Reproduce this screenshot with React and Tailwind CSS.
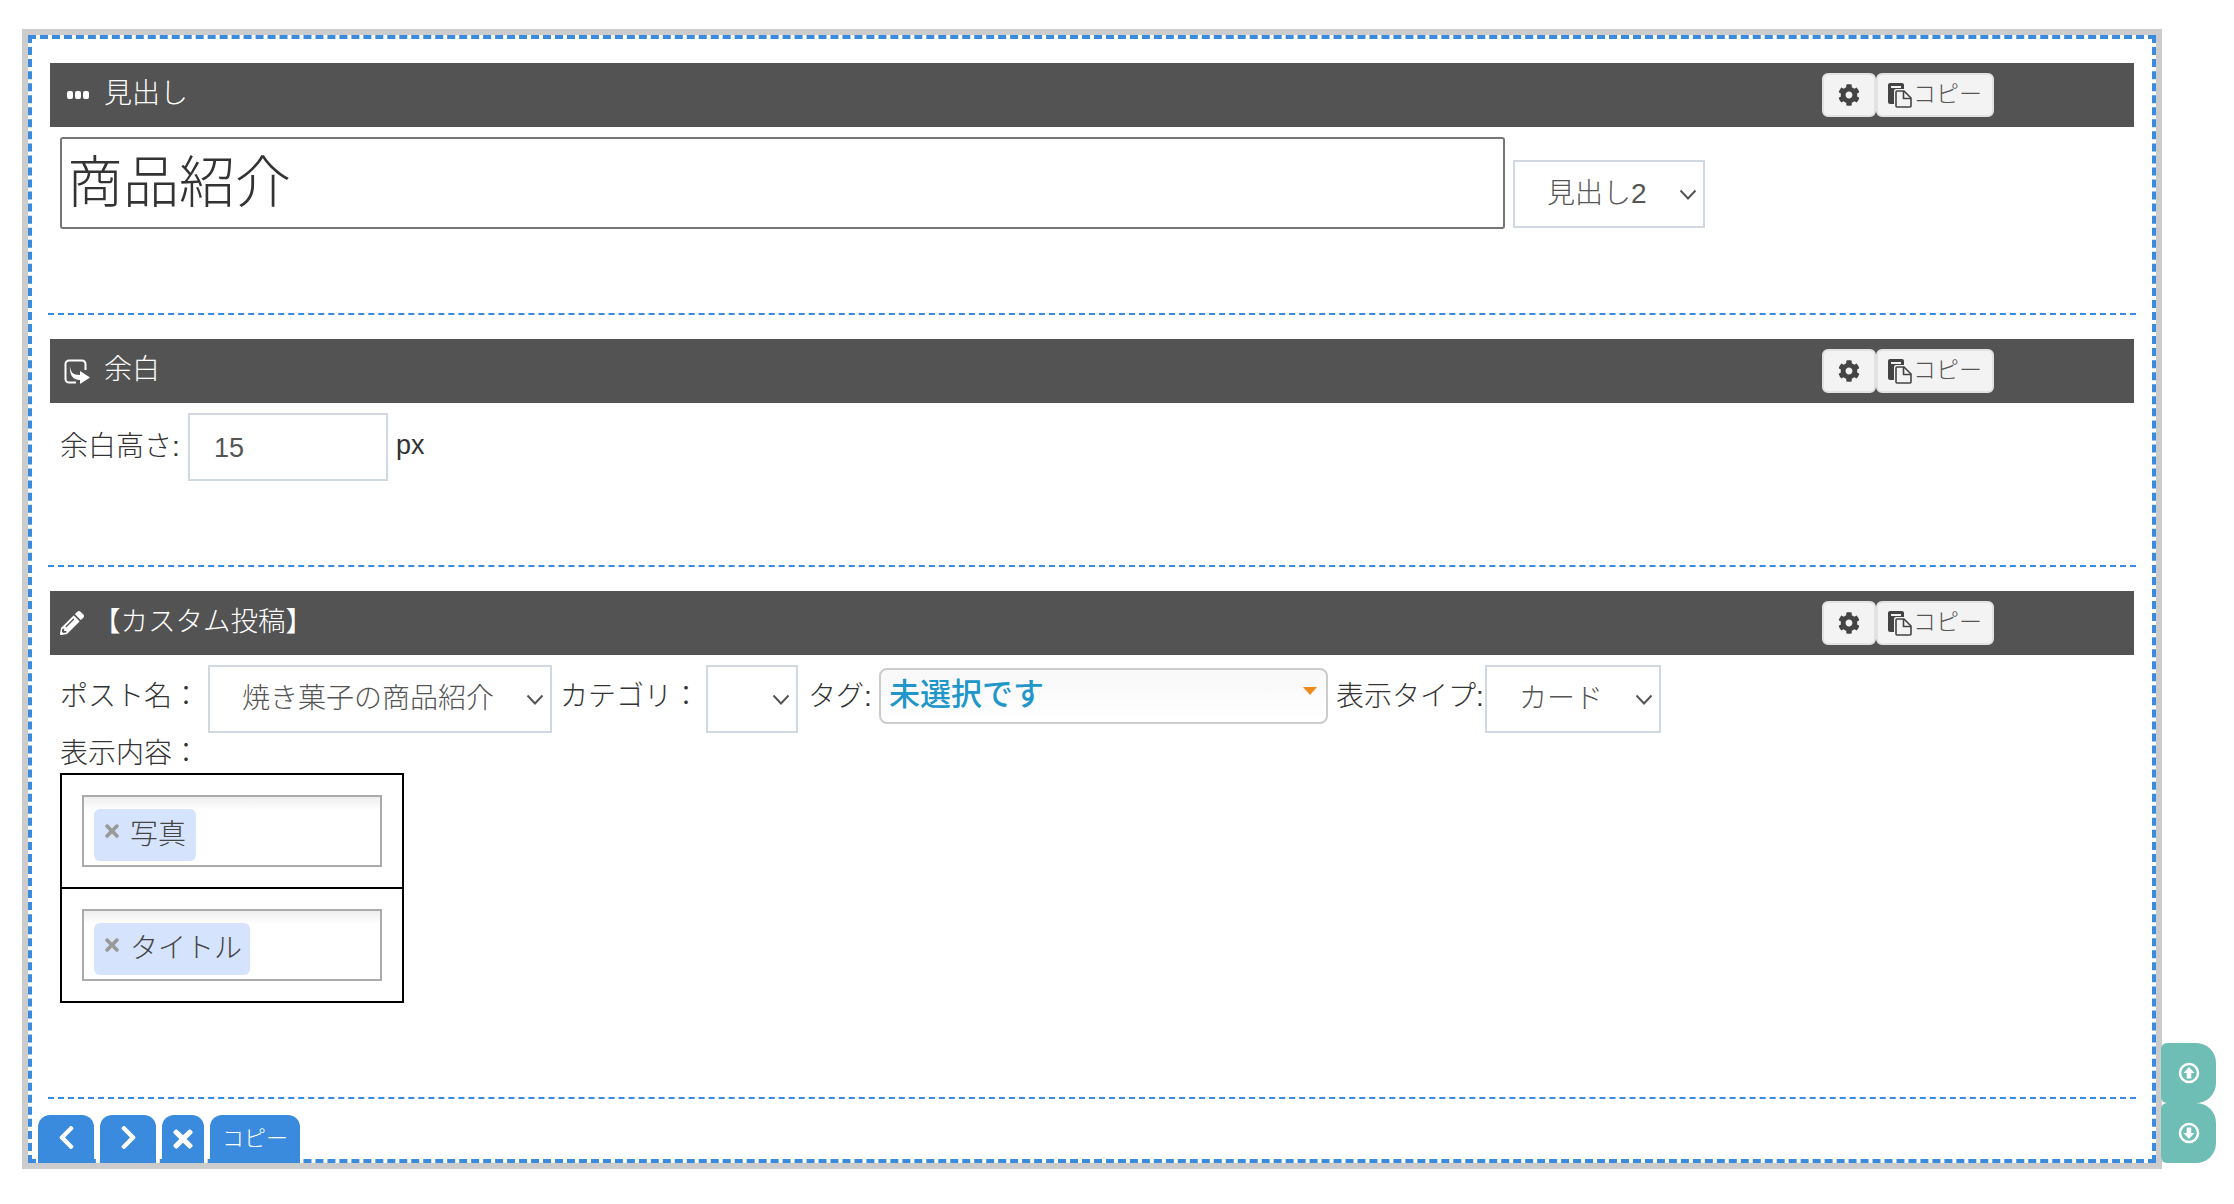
import React from 'react';
import { FaCog, FaPencilAlt, FaChevronLeft, FaChevronRight, FaTimes } from 'react-icons/fa';

const FONT = "font-['Liberation_Sans','Noto_Sans_CJK_JP',sans-serif]";

const Chevron = () => (
  <svg width="18" height="11" viewBox="0 0 18 11" fill="none" stroke="#555" strokeWidth="2">
    <path d="M1.5 1.5 9 9.5l7.5-8" />
  </svg>
);

const Dots = () => (
  <svg width="22" height="8" viewBox="0 0 22 8" fill="#fff">
    <rect x="0" y="0" width="6" height="8" rx="2" />
    <rect x="8" y="0" width="6" height="8" rx="2" />
    <rect x="16" y="0" width="6" height="8" rx="2" />
  </svg>
);

const ShareIcon = () => (
  <svg width="27" height="25" viewBox="0 0 27 25" fill="none">
    <path d="M12 23.5H5A3.5 3.5 0 0 1 1.500 20V5A3.500 3.500 0 0 1 5 1.500h13A3.500 3.500 0 0 1 21.500 5v6" stroke="#fff" strokeWidth="2" />
    <path d="M6 6c0 7 3 10 10 10v-4l10 6.500-10 6.500v-4C9 21 5 16 6 6z" fill="#fff" />
  </svg>
);

const CopyIcon = () => (
  <svg width="25" height="25" viewBox="0 0 25 25" className="shrink-0">
    <path d="M2 0h12a2 2 0 0 1 2 2v4H8a2 2 0 0 0-2 2v13H2a2 2 0 0 1-2-2V2a2 2 0 0 1 2-2z" fill="#444" />
    <rect x="3" y="3" width="10" height="2" fill="#f3f3f3" />
    <path d="M9 8h7l7 7v8a1 1 0 0 1-1 1H9a1 1 0 0 1-1-1V9a1 1 0 0 1 1-1z" fill="#f3f3f3" stroke="#444" strokeWidth="1.600" />
    <path d="M15.500 8v7.500H23" fill="none" stroke="#444" strokeWidth="1.600" />
  </svg>
);

const Ring = ({ down }) => (
  <svg width="22" height="22" viewBox="0 0 22 22" fill="none" className={down ? 'rotate-180' : ''}>
    <circle cx="11" cy="11" r="9" stroke="#fff" strokeWidth="2.500" />
    <path d="M11 5l5.500 6H13.300v5.500H8.700V11H5.500z" fill="#fff" />
  </svg>
);

const Bar = ({ icon, title, titleClass, iconClass }) => (
  <div className="flex h-16 items-center bg-[#535353] pr-[140px] text-white">
    <div className={`flex w-[54px] shrink-0 items-center ${iconClass}`}>{icon}</div>
    <span className={`-mt-[2px] font-light ${titleClass || 'text-[28px]'}`}>{title}</span>
    <div className="ml-auto flex text-[#444]">
      <button className="flex h-11 w-[54px] items-center justify-center rounded-md border-2 border-[#e2e2e2] bg-[#f3f3f3]">
        <FaCog size={22} />
      </button>
      <button className="flex h-11 w-[118px] items-center justify-center rounded-md border-2 border-[#e2e2e2] bg-[#f3f3f3] text-[23px] font-light text-[#555]">
        <CopyIcon />
        <span className="-mt-[2px]">コピー</span>
      </button>
    </div>
  </div>
);

const Select = ({ value, className }) => (
  <div className={`flex h-[68px] shrink-0 items-center justify-between border-2 border-[#d2d8e2] bg-white pl-[32px] pr-[6px] text-[28px] font-light text-[#555] ${className}`}>
    <span>{value}</span>
    <Chevron />
  </div>
);

const Chip = ({ label, className }) => (
  <div className="flex h-[72px] w-[300px] items-start border-2 border-[#aaa] bg-gradient-to-b from-[#eeeeee] to-white to-20% pl-[10px] pt-3">
    <div className={`flex h-[52px] items-center rounded-md bg-[#d5e3fd] pl-[8px] ${className}`}>
      <FaTimes size={20} className="-mt-[8px] shrink-0 text-[#999]" />
      <span className="ml-[8px] text-[28px] font-light text-[#444]">{label}</span>
    </div>
  </div>
);

const Block = ({ children, bodyClass }) => (
  <section className="mx-4 border-b-2 border-dashed border-[#3a8bdd] px-0.5 pt-6">
    {children[0]}
    <div className={`pl-[10px] pt-[10px] text-[28px] font-light text-[#333] ${bodyClass}`}>{children[1]}</div>
  </section>
);

export default function App() {
  return (
    <div className={`${FONT} relative min-h-[1204px] bg-white pl-[22px] pt-[29px]`}>
      <div className="relative h-[1140px] w-[2140px] border-[6px] border-[#cccccc]">
        <div className="h-full border-4 border-dashed border-[#3a8bdd] bg-white">
          <Block bodyClass="h-[186px]">
            <Bar icon={<Dots />} iconClass="pl-[17px]" title="見出し" />
            <div className="flex items-start">
              <input
                readOnly
                value="商品紹介"
                className="h-[92px] w-[1445px] rounded-[3px] border-2 border-[#767676] pb-[11px] pl-[5px] text-[56px] font-light text-[#333]"
              />
              <Select value="見出し2" className="ml-2 mt-[23px] w-[192px]" />
            </div>
          </Block>

          <Block bodyClass="h-[162px]">
            <Bar icon={<ShareIcon />} iconClass="pl-[14px]" title="余白" />
            <div className="flex items-start">
              <span className="mt-[13px] w-[128px] shrink-0">余白高さ:</span>
              <input
                readOnly
                value="15"
                className="h-[68px] w-[200px] border-2 border-[#d2d8e2] pl-[24px] pt-[2px] text-[27px] text-[#555]"
              />
              <span className="ml-2 mt-[12px] text-[27px]">px</span>
            </div>
          </Block>

          <Block bodyClass="h-[442px]">
            <Bar icon={<FaPencilAlt size={24} />} iconClass="pl-[10px]" title="【カスタム投稿】" titleClass="-ml-[11px] text-[27.500px]" />
            <div>
              <div className="flex items-start">
                <span className="mt-[11px] w-[148px] shrink-0">ポスト名：</span>
                <Select value="焼き菓子の商品紹介" className="w-[344px]" />
                <span className="ml-[8px] mt-[11px] w-[146px] shrink-0">カテゴリ：</span>
                <Select value="" className="w-[92px]" />
                <span className="ml-[10px] mt-[11px] w-[71px] shrink-0">タグ:</span>
                <div className="relative mt-[3px] flex h-[56px] w-[449px] shrink-0 items-center rounded-lg border-2 border-[#cccccc] bg-gradient-to-b from-[#f8f8f8] to-white pb-[2px] pl-2 text-[31px] font-medium text-[#2196c8]">
                  未選択です
                  <span className="absolute right-[9px] top-[17px] h-0 w-0 border-x-[7px] border-t-[8px] border-x-transparent border-t-[#f18a1c]" />
                </div>
                <span className="ml-2 mt-[11px] w-[149px] shrink-0 whitespace-nowrap">表示タイプ:</span>
                <Select value="カード" className="w-[176px]" />
              </div>
              <div className="mt-[2px] leading-[38px]">表示内容：</div>
              <div className="w-[344px] border-2 border-black">
                <div className="border-b-2 border-black p-5">
                  <Chip label="写真" className="w-[102px]" />
                </div>
                <div className="p-5">
                  <Chip label="タイトル" className="w-[156px]" />
                </div>
              </div>
            </div>
          </Block>
        </div>

        <div className="absolute bottom-0 left-[10px] flex gap-[6px] text-white">
          <button className="flex h-12 w-14 items-center justify-center rounded-t-xl bg-[#3a8bdd] pb-1"><FaChevronLeft size={27} /></button>
          <button className="flex h-12 w-14 items-center justify-center rounded-t-xl bg-[#3a8bdd] pb-1"><FaChevronRight size={27} /></button>
          <button className="flex h-12 w-[42px] items-center justify-center rounded-t-xl bg-[#3a8bdd]"><FaTimes size={28} /></button>
          <button className="flex h-12 w-[90px] items-center justify-center rounded-t-xl bg-[#3a8bdd] pb-[2px] text-[22px] font-light">コピー</button>
        </div>
      </div>

      <div className="absolute left-[2161px] top-[1043px] flex flex-col">
        <button className="flex h-[60px] w-[55px] items-center justify-center rounded-l-md rounded-r-[20px] bg-[#6ebeb5]"><Ring /></button>
        <button className="flex h-[60px] w-[55px] items-center justify-center rounded-l-md rounded-r-[20px] bg-[#6ebeb5]"><Ring down /></button>
      </div>
    </div>
  );
}
